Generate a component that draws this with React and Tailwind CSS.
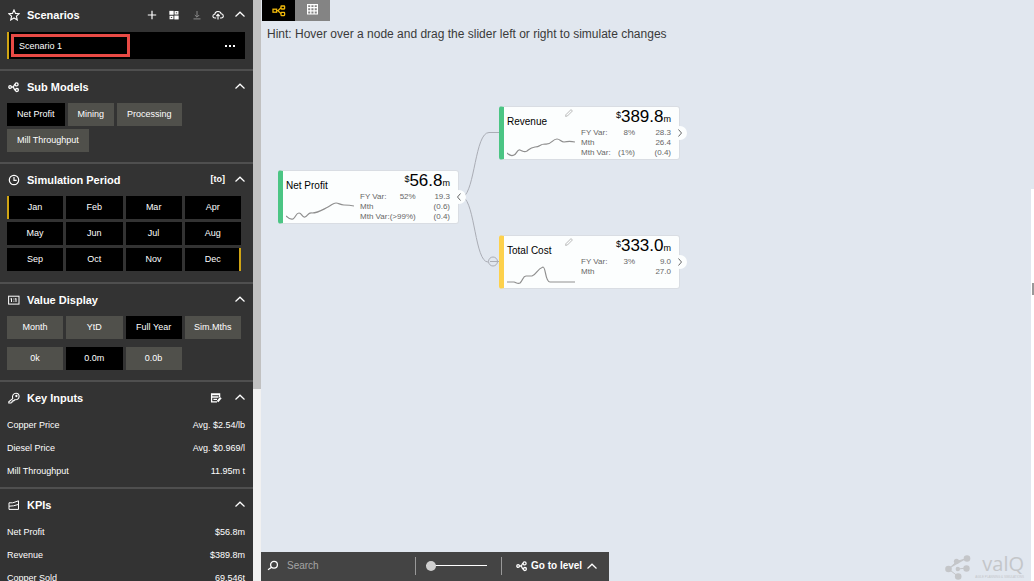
import React from "react";

const Svg = ({ className, box = "0 0 12 12", children, width = 1 }) => (
  <svg aria-hidden="true" className={className} viewBox={box} fill="none" stroke="currentColor" strokeWidth={width}>
    {children}
  </svg>
);

const Chevron = () => (
  <Svg className="h-2.5 w-2.5" box="0 0 10 10" width={1.2}>
    <path d="M0.5 7.5 L5 3.2 L9.5 7.5" />
  </Svg>
);
const StarIcon = () => (
  <Svg className="h-3 w-3" width={1.1}>
    <path d="M6 0.9 L7.5 4.4 L11.3 4.7 L8.4 7.2 L9.3 11 L6 9 L2.7 11 L3.6 7.2 L0.7 4.7 L4.5 4.4 Z" />
  </Svg>
);
const ModelIcon = ({ className = "h-3 w-3" }) => (
  <Svg className={className} width={1.3}>
    <circle cx="2.1" cy="6" r="1.3" />
    <circle cx="8.6" cy="3.4" r="1.5" />
    <circle cx="8.9" cy="9" r="1.5" />
    <path d="M3.4 6 H5 C6 6 5.8 3.6 7.1 3.4 M5 6 C6 6 5.8 9 7.4 9" />
  </Svg>
);
const ClockIcon = () => (
  <Svg className="h-3 w-3" width={1.2}>
    <circle cx="6" cy="6" r="4.7" />
    <path d="M6 3 V6.4 H8.7" />
  </Svg>
);
const ValueIcon = () => (
  <Svg className="h-3 w-3">
    <rect x="0.6" y="2.2" width="10.4" height="7.9" />
    <path d="M3.5 4.3 V8 M8 4.3 V8 M2.5 4.9 H3.5 M7 4.9 H8 M5.4 5 H6.4 M5.4 7.2 H6.4" />
  </Svg>
);
const KeyIcon = () => (
  <Svg className="h-3 w-3" width={1.1}>
    <path d="M4.7 6.6 C3.8 3.6 5.6 1.2 8 1.2 C10 1.2 11.2 2.6 11.1 4.5 C11 6.7 9 8.2 6.9 7.7 L6 8.7 L4.9 8.6 L4.7 9.8 L3.6 9.9 L3 11 L0.8 11 V9.8 Z" />
    <circle cx="8.4" cy="4" r="0.6" />
  </Svg>
);
const KpiIcon = () => (
  <Svg className="h-3 w-3">
    <path d="M1 10.4 V3.8 H4.5 L6 3.4 L10.5 1.8 V10.4 Z M1 7.2 L5.5 6.8 L10.5 5.4" />
  </Svg>
);
const PlusIcon = () => (
  <Svg className="h-2.5 w-2.5" box="0 0 10 10" width={1.2}>
    <path d="M5 0.8 V9.2 M0.8 5 H9.2" />
  </Svg>
);
const GridSquares = () => (
  <Svg className="h-2.5 w-2.5" box="0 0 10 10" width={1.3}>
    <rect x="1" y="1.5" width="3" height="2.6" fill="currentColor" />
    <rect x="6.2" y="1.7" width="2.6" height="2.2" />
    <rect x="1.2" y="6.4" width="2.6" height="2.2" />
    <rect x="6" y="6.2" width="3" height="2.6" fill="currentColor" />
  </Svg>
);
const DownloadIcon = () => (
  <Svg className="h-2.5 w-2.5" box="0 0 10 10">
    <path d="M5 1 V7 M2.8 5 L5 7.2 L7.2 5 M1.5 8.9 H8.5" />
  </Svg>
);
const CloudIcon = () => (
  <Svg className="h-3 w-3" width={1.1}>
    <path d="M4.2 9 H3 C0.2 9 0.2 5.4 2.8 5.3 C3 1.8 8.4 1.6 9.2 4.8 C12 5 12 9 9.3 9 H8 M6 10.6 V5.6 M4.3 7.1 L6 5.4 L7.7 7.1" />
  </Svg>
);
const NoteIcon = () => (
  <Svg className="h-3 w-3" width={1.3}>
    <path d="M7 9.8 H1.6 V2 H9.6 V5 M1.6 2.6 H9.6 M1.6 5 H8.5 M3.4 7.4 H7" />
    <path strokeWidth="2.2" d="M10.8 5.6 L7.6 9.6" />
  </Svg>
);
const SearchIcon = () => (
  <Svg className="h-3 w-3" width={1.3}>
    <circle cx="7" cy="4.8" r="3.4" />
    <path d="M4.6 7.2 L1 9.8" />
  </Svg>
);

function Section({ icon, title, actions, children, first = false }) {
  return (
    <section className={first ? "px-2 pt-[5px] pb-2.5" : "border-t-2 border-[#4f4f4f] px-2 pt-1.5 pb-2.5"}>
      <header className="flex h-5 items-center justify-between">
        <h2 className="flex items-center gap-[7px] text-[11px] font-bold">
          {icon}
          {title}
        </h2>
        <div className="flex items-center">
          {actions}
          <button aria-label={"Collapse " + title} className="pb-0.5">
            <Chevron />
          </button>
        </div>
      </header>
      {children}
    </section>
  );
}

const Chip = ({ children, active, className = "" }) => (
  <button className={(active ? "bg-black " : "bg-[#50504b] ") + "h-[23px] whitespace-nowrap " + className}>
    {children}
  </button>
);

function Pairs({ rows }) {
  return (
    <dl className="-mb-1.5 -ml-px pt-1.5">
      {rows.map(([name, value]) => (
        <div key={name} className="flex h-[23px] items-center justify-between">
          <dt>{name}</dt>
          <dd>{value}</dd>
        </div>
      ))}
    </dl>
  );
}

const MONTHS = ["Jan", "Feb", "Mar", "Apr", "May", "Jun", "Jul", "Aug", "Sep", "Oct", "Nov", "Dec"];

function Sidebar() {
  return (
    <aside className="w-[253px] shrink-0 overflow-y-auto bg-[#333] text-[9px] text-white [scrollbar-width:none]">
      <Section
        first
        icon={<StarIcon />}
        title="Scenarios"
        actions={
          <div className="mr-[11px] flex items-center gap-3">
            <button aria-label="Add scenario"><PlusIcon /></button>
            <button aria-label="Compare scenarios"><GridSquares /></button>
            <button aria-label="Download" className="ml-px text-[#8a8a8a]"><DownloadIcon /></button>
            <button aria-label="Upload" className="-ml-0.5"><CloudIcon /></button>
          </div>
        }
      >
        <div className="mt-[7px] -ml-px flex h-[27px] items-center justify-between border-l-2 border-[#cfa414] bg-black pr-2.5 pl-0.5">
          <input
            aria-label="Scenario name"
            defaultValue="Scenario 1"
            className="h-[23px] w-[119px] border-[3px] border-[#e84a45] bg-black px-[5px] outline-none"
          />
          <button aria-label="More options" className="flex gap-0.5">
            <i className="h-0.5 w-0.5 bg-white" />
            <i className="h-0.5 w-0.5 bg-white" />
            <i className="h-0.5 w-0.5 bg-white" />
          </button>
        </div>
      </Section>

      <Section icon={<ModelIcon />} title="Sub Models">
        <div className="-ml-px flex flex-wrap gap-[3px] pt-1.5">
          <Chip active className="px-2.5">Net Profit</Chip>
          <Chip className="px-2.5">Mining</Chip>
          <Chip className="px-2.5">Processing</Chip>
          <Chip className="px-2.5">Mill Throughput</Chip>
        </div>
      </Section>

      <Section
        icon={<ClockIcon />}
        title="Simulation Period"
        actions={<button className="mr-2.5 text-[9px] font-bold">[to]</button>}
      >
        <div className="mr-1 -ml-px grid grid-cols-4 gap-x-[3px] gap-y-[3px] pt-1.5">
          {MONTHS.map((m, i) => (
            <button
              key={m}
              className={
                "h-[23px] border-x-2 bg-black " +
                (i === 0 ? "border-r-black border-l-[#cfa414]" : i === 11 ? "border-r-[#cfa414] border-l-black" : "border-black")
              }
            >
              {m}
            </button>
          ))}
        </div>
        <div className="h-px" />
      </Section>

      <Section icon={<ValueIcon />} title="Value Display">
        <div className="mr-1 -ml-px grid grid-cols-4 gap-x-[3px] gap-y-2 pt-1.5">
          <Chip>Month</Chip>
          <Chip>YtD</Chip>
          <Chip active>Full Year</Chip>
          <Chip>Sim.Mths</Chip>
          <Chip>0k</Chip>
          <Chip active>0.0m</Chip>
          <Chip>0.0b</Chip>
        </div>
      </Section>

      <Section
        icon={<KeyIcon />}
        title="Key Inputs"
        actions={<button aria-label="Edit inputs" className="mr-[13px]"><NoteIcon /></button>}
      >
        <Pairs rows={[["Copper Price", "Avg. $2.54/lb"], ["Diesel Price", "Avg. $0.969/l"], ["Mill Throughput", "11.95m t"]]} />
      </Section>

      <Section icon={<KpiIcon />} title="KPIs">
        <Pairs rows={[["Net Profit", "$56.8m"], ["Revenue", "$389.8m"], ["Copper Sold", "69,546t"]]} />
      </Section>
    </aside>
  );
}

function NodeCard({ place, accent, title, value, rows, line, arrow, pencil }) {
  return (
    <article className={"absolute flex h-[54px] w-[181px] rounded-[3px] border border-l-[5px] border-[#d9dde3] bg-[#fcfefe] pl-[3px] " + accent + " " + place}>
      <div className="flex w-[74px] flex-col justify-between pt-[9px] pb-0.5">
        <h3 className="text-[10px] leading-3 text-black">{title}</h3>
        <svg aria-hidden="true" viewBox="0 0 68 20" className="h-5 w-[68px]" fill="none" stroke="#8f8f8f" strokeWidth="1.2">
          <path d={line} />
        </svg>
      </div>
      <div className="flex-1 pr-2 text-[#666]">
        <p className="flex justify-end text-[17px] leading-5 text-black">
          <span className="text-[9px] leading-4">$</span>
          <span>{value}</span>
          <span className="self-end text-[9px] leading-4">m</span>
        </p>
        <table className="mt-px w-full text-[8px] leading-[10px]">
          <tbody>
            {rows.map(([label, pct, amount]) => (
              <tr key={label}>
                <th scope="row" className="w-7 p-0 text-left font-normal whitespace-nowrap">{label}</th>
                <td className="p-0 text-right">{pct}</td>
                <td className="w-9 p-0 text-right">{amount}</td>
              </tr>
            ))}
          </tbody>
        </table>
      </div>
      {pencil && (
        <svg aria-hidden="true" viewBox="0 0 8 8" className="absolute top-0.5 left-[61px] h-2 w-2" fill="none" stroke="#aaa" strokeWidth="0.8">
          <path d="M0.6 7.4 L1 5.6 L6 0.6 L7.4 2 L2.4 7 Z" />
        </svg>
      )}
      <button aria-label={"Toggle children of " + title} className="absolute top-[19px] -right-2 flex h-3.5 w-3.5 items-center justify-center rounded-full bg-[#fcfefe] text-[#666]">
        <Svg className="h-2 w-2" box="0 0 8 8">
          <path d={arrow === "left" ? "M5.5 0.5 L2.5 4 L5.5 7.5" : "M2.5 0.5 L5.5 4 L2.5 7.5"} />
        </Svg>
      </button>
    </article>
  );
}

function Logo() {
  return (
    <div className="flex items-center gap-1 pb-px text-[#c4c6c9]">
      <svg aria-hidden="true" viewBox="0 0 26 26" className="h-[26px] w-[26px]" fill="currentColor" stroke="none">
        <path stroke="currentColor" strokeWidth="1" d="M3.500 15 L12 7.300 L22 4.500 M3.500 15 L13.500 22.700 M13 15 L21.500 14" />
        <circle cx="3.500" cy="15" r="3.300" />
        <circle cx="11.500" cy="7.300" r="2.600" />
        <circle cx="22" cy="4.500" r="3.300" />
        <circle cx="12.800" cy="15" r="2.200" />
        <circle cx="21.500" cy="14.500" r="3.200" />
        <circle cx="13.200" cy="22.500" r="3.300" />
      </svg>
      <div className="flex flex-col items-end">
        <span className="font-['Open_Sans',sans-serif] text-[20px] leading-[22px] font-medium">valQ</span>
        <span className="text-[3px] leading-[5px] whitespace-nowrap">AGILE PLANNING &amp; SIMULATIONS</span>
      </div>
    </div>
  );
}

export default function App() {
  return (
    <div className="flex h-screen overflow-hidden bg-[#e1e7ef] font-['Liberation_Sans',Arial,sans-serif]">
      <Sidebar />
      <div className="flex w-2 shrink-0 flex-col bg-[#f1f1f1]">
        <div className="h-[67%] bg-[#c1c1c1]" />
      </div>
      <main className="relative flex min-w-0 flex-1 flex-col">
        <nav className="flex h-[21px] pl-px">
          <button aria-label="Tree view" className="flex w-[33px] items-center justify-center bg-black text-[#f0b90b]">
            <Svg className="h-3.5 w-3.5" box="0 0 14 14" width={1.3}>
              <rect x="1" y="5.2" width="3.6" height="3" />
              <rect x="9" y="2" width="3.6" height="3" rx="0.5" />
              <rect x="9" y="8.4" width="3.6" height="3.2" rx="0.5" />
              <path d="M4.600 6.700 H6 L9 3.800 M6 6.700 L9 9.600" />
            </Svg>
          </button>
          <button aria-label="Table view" className="flex w-[35px] items-start justify-center bg-[#848484] pt-1 text-white">
            <Svg className="h-[11px] w-[11px]" box="0 0 11 11">
              <path strokeWidth="1.2" d="M0.6 0 V10.5 M3.8 0 V10.5 M7.1 0 V10.5 M10.4 0 V10.5 M0 0.6 H11 M0 3.6 H11 M0 6.8 H11 M0 10 H11" />
            </Svg>
          </button>
        </nav>
        <p className="px-1.5 pt-1 text-[12px] leading-[18px] text-[#3a3a3a]">
          Hint: Hover over a node and drag the slider left or right to simulate changes
        </p>

        <div className="flex-1">
          <svg aria-hidden="true" className="absolute top-[120px] left-[196px] h-[160px] w-[42px]" viewBox="0 0 42 160" fill="none" stroke="#aaadb5" strokeWidth="1">
            <path d="M6 77 C18 71 18 12.500 32 12.500 H42 M6 77 C18 83 18 142 31 142" />
            <circle cx="36" cy="141.500" r="4.500" />
            <path d="M33 141.500 H42" />
          </svg>
          <NodeCard
            place="left-[17px] top-[170px]"
            accent="border-l-[#4bc584]"
            title="Net Profit"
            value="56.8"
            arrow="left"
            rows={[["FY Var:", "52%", "19.3"], ["Mth", "", "(0.6)"], ["Mth Var:", "(>99%)", "(0.4)"]]}
            line="M0 15 C2 17 4 19 7 18 C10 16 10 12 13 12 C16 12 16 17 19 16 C22 15 22 11 26 12 C32 12 36 9 42 6 C46 4 47 2 50 2 C53 2 54 4 58 4 C62 4 64 4 68 5"
          />
          <NodeCard
            place="left-[238px] top-[106px]"
            accent="border-l-[#4bc584]"
            title="Revenue"
            value="389.8"
            pencil
            rows={[["FY Var:", "8%", "28.3"], ["Mth", "", "26.4"], ["Mth Var:", "(1%)", "(0.4)"]]}
            line="M0 16 C2 18 5 19 7 18 C10 17 10 12 13 13 C16 14 17 16 20 14 C24 11 23 11 28 10 C34 10 32 7 38 7 C45 8 45 2 50 2 C53 2 54 5 57 5 C61 4 64 4 68 5"
          />
          <NodeCard
            place="left-[238px] top-[235px]"
            accent="border-l-[#fdd14c]"
            title="Total Cost"
            value="333.0"
            pencil
            rows={[["FY Var:", "3%", "9.0"], ["Mth", "", "27.0"]]}
            line="M0 16 H7 C10 17 11 18 13 17 C16 14 16 10 19 10 H25 C29 9 30 3 36 1 C39 1 38 16 43 16 H68"
          />
        </div>

        <footer className="flex items-end justify-between pr-2.5 text-white">
          <div className="flex h-[29px] items-center bg-[#444] pb-0.5">
            <label className="flex w-[154px] items-center gap-2 pl-1.5">
              <SearchIcon />
              <input type="search" aria-label="Search" placeholder="Search" className="w-[110px] bg-transparent text-[10px] outline-none placeholder:text-[#a5a5a5]" />
            </label>
            <span className="h-[18px] w-px bg-[#999]" />
            <input
              type="range"
              aria-label="Zoom"
              defaultValue="0"
              className="mr-3.5 ml-2.5 h-3 w-[61px] appearance-none bg-[linear-gradient(#fff,#fff)] bg-[length:100%_1px] bg-center bg-no-repeat [&::-webkit-slider-thumb]:h-2.5 [&::-webkit-slider-thumb]:w-2.5 [&::-webkit-slider-thumb]:appearance-none [&::-webkit-slider-thumb]:rounded-full [&::-webkit-slider-thumb]:bg-[#cfcfcf]"
            />
            <span className="h-[18px] w-px bg-[#999]" />
            <button className="flex items-center gap-[3px] pr-3 pl-3.5 text-[10px] font-bold whitespace-nowrap">
              <ModelIcon className="h-3 w-3" />
              Go to level
              <span className="ml-0.5"><Chevron /></span>
            </button>
          </div>
          <Logo />
        </footer>
        <div className="absolute top-[189px] right-0 bottom-0 w-[3px] bg-white">
          <div className="mt-[94px] ml-px h-3 bg-[#999]" />
        </div>
      </main>
    </div>
  );
}
